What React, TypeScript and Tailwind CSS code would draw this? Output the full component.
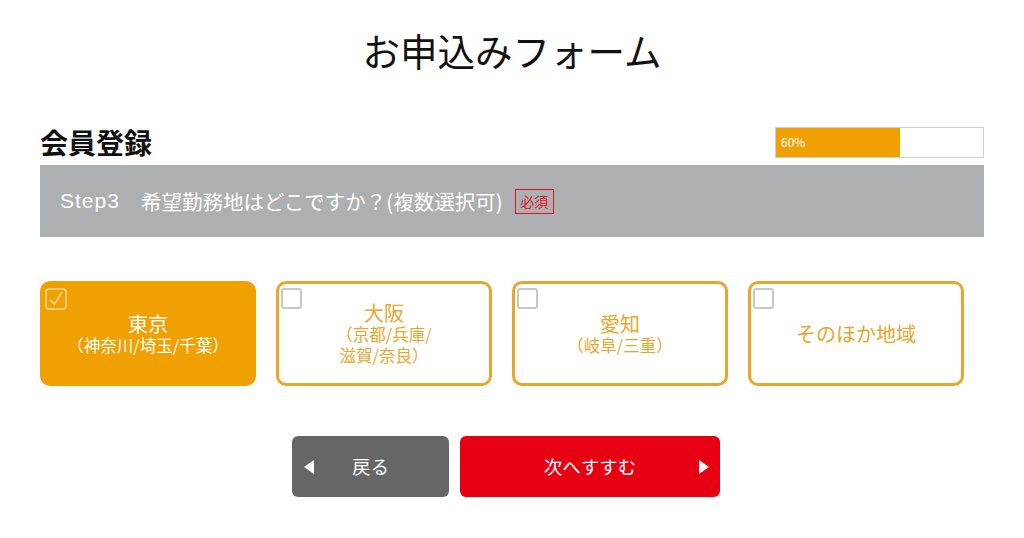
import { useState } from 'react'

const areas = [
  { key: 'tokyo', name: '東京', sub: ['（神奈川/埼玉/千葉）'] },
  { key: 'osaka', name: '大阪', sub: ['（京都/兵庫/', '滋賀/奈良）'] },
  { key: 'aichi', name: '愛知', sub: ['（岐阜/三重）'] },
  { key: 'other', name: 'そのほか地域', sub: [] as string[] },
]

function CheckBox({ checked }: { checked: boolean }) {
  if (checked) {
    return (
      <svg width="22" height="22" viewBox="0 0 22 22" className="absolute left-[2px] top-[4px]">
        <rect x="1" y="1" width="20" height="20" rx="3" fill="none" stroke="#f8d99a" strokeWidth="1.5" />
        <path d="M5 11.5 L9.5 16 L17 4" fill="none" stroke="#f8d99a" strokeWidth="1.5" />
      </svg>
    )
  }
  return (
    <span className="absolute left-[2px] top-[4px] h-[21px] w-[21px] rounded-[3px] border-2 border-[#c8c8c8] bg-white" />
  )
}

export default function App() {
  const [selected, setSelected] = useState<string[]>(['tokyo'])

  const toggle = (key: string) => {
    setSelected(selected.includes(key) ? selected.filter(k => k !== key) : [...selected, key])
  }

  return (
    <div
      className="flex min-h-[538px] w-[1024px] flex-col bg-white px-10 pt-[28px]"
      style={{ fontFamily: '"Noto Sans CJK JP", "Noto Sans", sans-serif' }}
    >
      <h1 className="text-center text-[37.5px] leading-[44px] text-[#111]">お申込みフォーム</h1>

      <div className="mt-[55px] flex h-[30px] items-center justify-between">
        <h2 className="text-[28px] font-bold leading-[30px] text-[#111]">会員登録</h2>
        <div className="flex h-[31px] w-[209px] border border-[#cfcfcf] bg-white">
          <div className="flex h-full w-[60%] items-center bg-[#f0a000] pl-[5px] text-[12px] text-white">
            60%
          </div>
        </div>
      </div>

      <div className="mt-[8px] flex h-[72px] items-center bg-[#aeafb1] px-5 text-white">
        <span className="text-[21px] tracking-[1px]" style={{ fontFamily: '"Liberation Sans", sans-serif' }}>
          Step3
        </span>
        <span className="ml-[21px] text-[20.5px]">希望勤務地はどこですか？(複数選択可)</span>
        <span className="ml-[12px] flex h-[25px] w-[39px] items-center justify-center border border-[#e0141e] text-[14px] leading-none text-[#e0141e]">
          必須
        </span>
      </div>

      <div className="mt-[44px] grid w-[924px] grid-cols-4 gap-5">
        {areas.map(area => {
          const on = selected.includes(area.key)
          return (
            <button
              key={area.key}
              type="button"
              onClick={() => toggle(area.key)}
              className={
                on
                  ? 'relative flex h-[105px] flex-col items-center justify-center rounded-[10px] border-[3px] border-[#f0a000] bg-[#f0a000] text-white'
                  : 'relative flex h-[105px] flex-col items-center justify-center rounded-[10px] border-[3px] border-[#e9a52c] bg-white text-[#e9a52c]'
              }
            >
              <CheckBox checked={on} />
              <span className="text-[20px] leading-[23px]">{area.name}</span>
              {area.sub.map(s => (
                <span key={s} className="text-[16.5px] leading-[21px]">
                  {s}
                </span>
              ))}
            </button>
          )
        })}
      </div>

      <div className="ml-[252px] mt-[50px] flex gap-[11px]">
        <button
          type="button"
          className="relative flex h-[61px] w-[157px] items-center justify-center rounded-[6px] bg-[#666666] text-[18.5px] text-white"
        >
          <svg width="10" height="14" viewBox="0 0 10 14" className="absolute left-[12px] top-[24px]">
            <path d="M10 0 L0 7 L10 14 Z" fill="white" />
          </svg>
          戻る
        </button>
        <button
          type="button"
          className="relative flex h-[61px] w-[260px] items-center justify-center rounded-[6px] bg-[#e60012] text-[18.5px] text-white"
        >
          次へすすむ
          <svg width="10" height="14" viewBox="0 0 10 14" className="absolute right-[11px] top-[24px]">
            <path d="M0 0 L10 7 L0 14 Z" fill="white" />
          </svg>
        </button>
      </div>
    </div>
  )
}
